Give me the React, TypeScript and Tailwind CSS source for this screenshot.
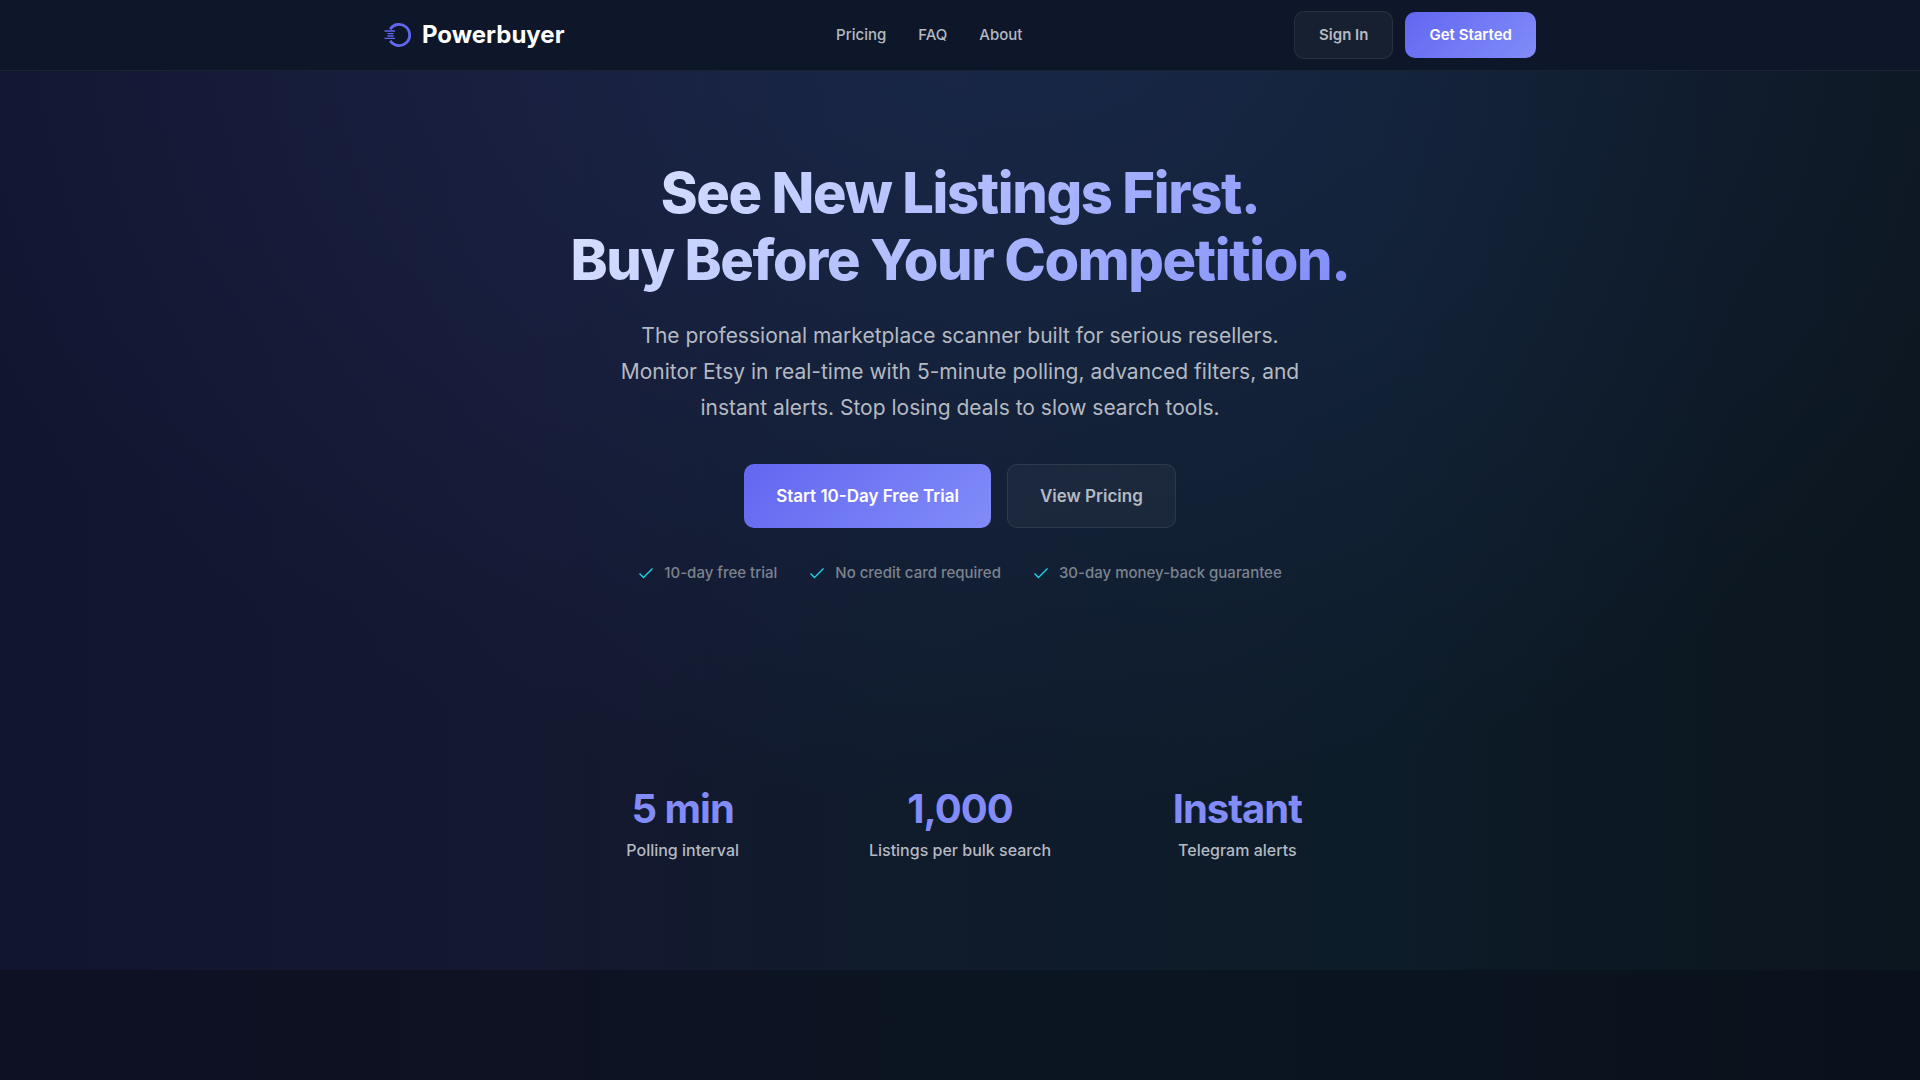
const navLinks = ["Pricing", "FAQ", "About"];
const perks = ["10-day free trial", "No credit card required", "30-day money-back guarantee"];
const stats = [
  { value: "5 min", label: "Polling interval" },
  { value: "1,000", label: "Listings per bulk search" },
  { value: "Instant", label: "Telegram alerts" },
];

function Logo() {
  return (
    <svg viewBox="0 0 28 28" className="size-7" fill="none" stroke="#6366f1" aria-hidden="true">
      <path d="M6.2 8.2A10.6 10.6 0 1 1 6.2 19.8" strokeWidth="2.8" />
      <path d="M0.5 10H11M3.5 12.6H9.5M3.5 15H9.5M0.5 17.4H11" strokeWidth="1.3" />
    </svg>
  );
}

function Check() {
  return (
    <svg viewBox="0 0 16 16" className="size-4" fill="none" stroke="#22d3ee" strokeWidth="1.4" aria-hidden="true">
      <path d="M1.5 8.5L5.5 12.5L14.5 3.5" />
    </svg>
  );
}

export default function App() {
  return (
    <div className="flex min-h-screen flex-col bg-[#0f1a2b] bg-[radial-gradient(ellipse_60%_75%_at_52%_0%,rgba(48,68,140,0.3),transparent),linear-gradient(to_right,#12152f_0%,#141830_28%,#101b2c_46%,#0d1c29_72%,#0c1721_90%,#0c161f_100%)] font-['Inter',sans-serif] text-[#b4b9c2]">
      <header className="border-b border-white/5 bg-[#0e1729]">
        <div className="mx-auto flex h-[70px] max-w-[1200px] items-center justify-between px-6">
          <a href="#" className="flex items-center gap-2.5 text-2xl font-bold text-white">
            <Logo />
            Powerbuyer
          </a>
          <nav className="flex gap-8 text-[15px] font-medium">
            {navLinks.map((l) => (
              <a key={l} href="#">{l}</a>
            ))}
          </nav>
          <div className="flex items-center gap-3 text-[15px] leading-[22px] font-semibold">
            <button className="rounded-[10px] border border-white/8 bg-white/4 px-6 py-3">Sign In</button>
            <button className="rounded-[10px] bg-linear-135 from-[#6366f1] to-[#818cf8] px-6 py-3 text-white">Get Started</button>
          </div>
        </div>
      </header>
      <main className="flex flex-1 flex-col">
        <section className="flex flex-col items-center px-6 pt-[89px] pb-24 text-center">
          <h1 className="bg-linear-135 from-[#e0e7ff] to-[#818cf8] bg-clip-text text-[56px] leading-[67px] font-extrabold tracking-tight text-transparent">
            See New Listings First.
            <br />
            Buy Before Your Competition.
          </h1>
          <p className="mt-6 max-w-[700px] text-[21px] leading-9">
            The professional marketplace scanner built for serious resellers. Monitor Etsy in real-time with 5-minute
            polling, advanced filters, and instant alerts. Stop losing deals to slow search tools.
          </p>
          <div className="mt-[38px] flex gap-4 text-[17px] leading-6 font-semibold">
            <button className="rounded-[10px] bg-linear-135 from-[#6366f1] to-[#818cf8] px-8 py-5 text-white">Start 10-Day Free Trial</button>
            <button className="rounded-[10px] border border-white/8 bg-white/4 px-8">View Pricing</button>
          </div>
          <ul className="mt-[33px] flex gap-8 text-[15px] leading-6 font-medium text-[#7c838f]">
            {perks.map((p) => (
              <li key={p} className="flex items-center gap-2.5">
                <Check />
                {p}
              </li>
            ))}
          </ul>
        </section>
        <section className="px-6 pt-26 pb-27">
          <dl className="mx-auto grid max-w-[800px] grid-cols-3 gap-8 text-center">
            {stats.map((s) => (
              <div key={s.label} className="flex flex-col-reverse">
                <dt className="mt-[5px] text-base leading-6 font-medium">{s.label}</dt>
                <dd className="text-[40px] leading-[48px] font-bold tracking-tight text-[#818cf8]">{s.value}</dd>
              </div>
            ))}
          </dl>
        </section>
        <section className="min-h-24 flex-1 bg-[#0a0f1a]/55" />
      </main>
    </div>
  );
}
